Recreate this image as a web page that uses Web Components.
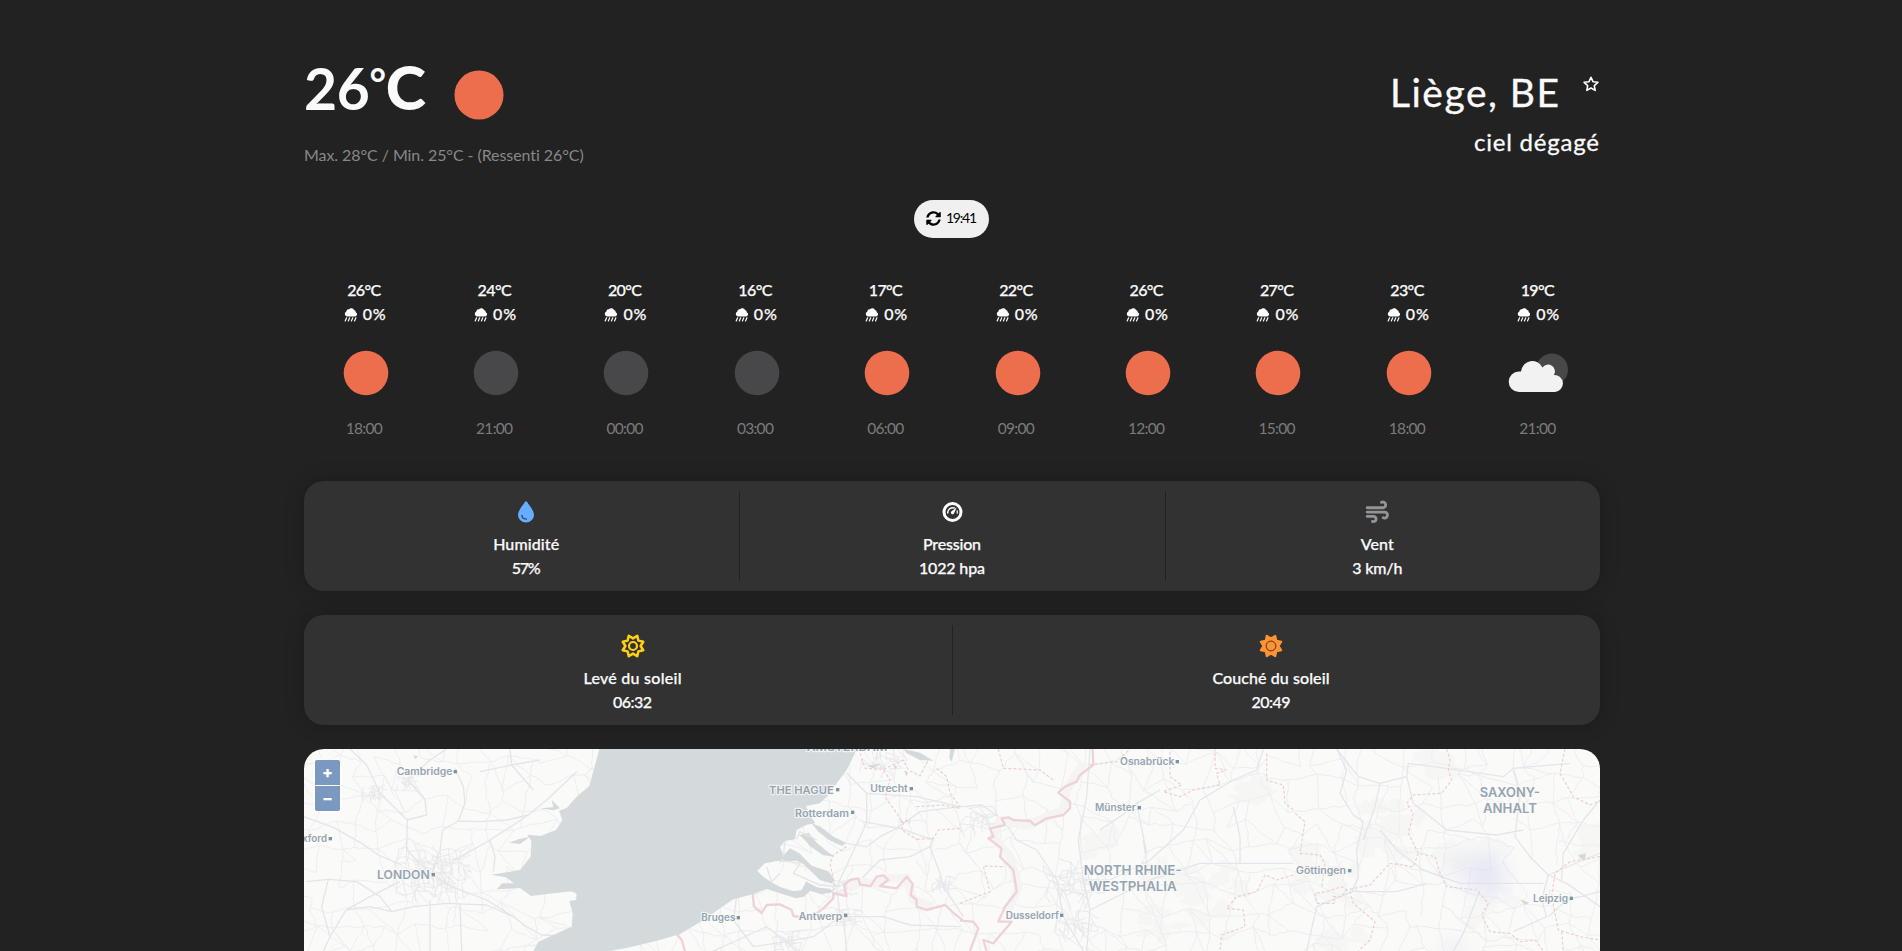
<!DOCTYPE html>
<html lang="fr">
<head>
<meta charset="utf-8">
<title>Météo</title>
<style>
html,body{margin:0;background:#222;height:951px;overflow:hidden}
body{font-family:Lato,"Open Sans",sans-serif;font-size:16px;color:#fafafa}
</style>
</head>
<body>
<weather-app></weather-app>
<script>
const define = (name, html, setup) => {
  const t = document.createElement('template');
  t.innerHTML = html;
  customElements.define(name, class extends HTMLElement {
    connectedCallback() {
      if (this.shadowRoot) return;
      this.attachShadow({mode: 'open'}).append(t.content.cloneNode(true));
      if (setup) setup(this, this.shadowRoot);
    }
  });
};

/* A single line whose tracking is spread to the width given in "w". */
define('track-line', `<style>
:host{display:inline-block;white-space:nowrap}
span{display:inline-block}
</style><span><slot></slot></span>`, (el, root) => {
  const s = root.querySelector('span'), w = +el.getAttribute('w');
  const n = el.textContent.length;
  if (n < 2) return;
  const ls = (w - s.getBoundingClientRect().width) / (n - 1);
  s.style.letterSpacing = ls + 'px';
  s.style.marginRight = -ls + 'px';
});

const sunShape = (() => {
  let p = '';
  for (let i = 0; i < 16; i++) {
    const ang = Math.PI / 8 * (i + 1), rad = i % 2 ? 7.6 : 11.1;
    p += (i ? 'L' : 'M') + (12 + rad * Math.cos(ang)).toFixed(2) + ' ' + (12 + rad * Math.sin(ang)).toFixed(2);
  }
  return p + 'Z';
})();

const icons = {
  clear: ['0 0 60 60', '<circle cx="30" cy="30" r="22.3" fill="#ec6e4c"/>'],
  night: ['0 0 60 60', '<circle cx="30" cy="30" r="22.3" fill="#48484a"/>'],
  cloudy: ['0 0 60 60', '<circle cx="43" cy="26.5" r="16" fill="#48484a"/><path d="M10 49a10.300 10.300 0 0 1 0-20.600q1 0 2 .2a11.300 11.300 0 0 1 21.500-4 6.600 6.600 0 0 1 11.300 7.400A8.200 8.200 0 0 1 46 49z" fill="#f2f2f2"/>'],
  star: ['0 0 16 16', '<path d="M8 1.300 10 5.700l4.900.6-3.600 3.300.9 4.800L8 12l-4.200 2.400.9-4.800L1.100 6.300 6 5.700z" fill="none" stroke="#fff" stroke-width="1.600" stroke-linejoin="round"/>'],
  sync: ['0 0 512 512', '<path fill="#000" d="M370.720 133.280C339.458 104.008 298.888 87.962 255.848 88c-77.458.068-144.328 53.178-162.791 126.850-1.344 5.363-6.122 9.150-11.651 9.150H24.103c-7.498 0-13.194-6.807-11.807-14.176C33.933 94.924 134.813 8 256 8c66.448 0 126.791 26.136 171.315 68.685L463.030 40.970C478.149 25.851 504 36.559 504 57.941V192c0 13.255-10.745 24-24 24H345.941c-21.382 0-32.090-25.851-16.971-40.971l41.750-41.749zM32 296h134.059c21.382 0 32.090 25.851 16.971 40.971l-41.750 41.750c31.262 29.273 71.835 45.319 114.876 45.280 77.418-.070 144.315-53.144 162.787-126.849 1.344-5.363 6.122-9.150 11.651-9.150h57.304c7.498 0 13.194 6.807 11.807 14.176C478.067 417.076 377.187 504 256 504c-66.448 0-126.791-26.136-171.315-68.685L48.970 471.030C33.851 486.149 8 475.441 8 454.059V320c0-13.255 10.745-24 24-24z"/>'],
  rain: ['0 0 14 14', '<path fill="#fff" d="M3 8.600A2.700 2.700 0 0 1 2.300 3.500 2.500 2.500 0 0 1 5 1.200 3 3 0 0 1 10 2a2 2 0 0 1 1.700 2.200 2.300 2.300 0 0 1-.5 4.400z"/><path stroke="#fff" stroke-width="1.200" stroke-linecap="round" d="M2.600 9.800 1.200 13M5.700 9.800 4.300 13M8.800 9.800 7.400 13M11.900 9.800 10.500 13"/>'],
  drop: ['0 0 24 24', '<path fill="#66adff" d="M12 1.200c.6 0 .9.300 1.200.9 2.200 4 6.800 8.300 6.800 12.800a8 7.600 0 0 1-16 0C4 10.400 8.600 6.100 10.800 2.100c.3-.6.600-.9 1.200-.9z"/><path d="M7.900 15.300q.4 3.700 4.400 3.900" fill="none" stroke="#2d3d55" stroke-width="1.300" stroke-linecap="round"/>'],
  gauge: ['0 0 24 24', '<circle cx="12.500" cy="12" r="8.500" fill="none" stroke="#fff" stroke-width="3"/><path d="M7.800 13.500a5 5 0 0 1 7-5.300" fill="none" stroke="#fff" stroke-width="1.400"/><path d="M16.600 7.600 14.200 13a1.700 1.700 0 1 1-2.600-1.800z" fill="#fff"/><path d="M17 10.400q.6 1.600.2 3.200" fill="none" stroke="#fff" stroke-width="1.200"/>'],
  wind: ['0 0 24 24', '<g fill="none" stroke="#939498" stroke-width="2.900" stroke-linecap="round"><path d="M2.200 7.800h15.300a2.900 2.900 0 1 0-1-5.500"/><path d="M2.200 12.100h17a3 3 0 1 1-1 5.700"/><path d="M2.200 16.400h6.300a2.600 2.600 0 1 1-1 5"/></g>'],
  sunrise: ['0 0 24 24', `<path d="${sunShape}" fill="none" stroke="#ffd014" stroke-width="2.500" stroke-linejoin="round"/><circle cx="12" cy="12" r="4" fill="none" stroke="#ffd014" stroke-width="2.200"/>`],
  sunset: ['0 0 24 24', `<path d="${sunShape}" fill="#ff9233" stroke="#ff9233" stroke-width="2" stroke-linejoin="round"/><circle cx="12" cy="12" r="4.900" fill="none" stroke="#4b3525" stroke-width="1"/>`]
};
define('app-icon', `<style>:host{display:block;flex:none}svg{display:block;width:100%;height:100%;overflow:visible}</style><svg></svg>`, (el, root) => {
  const [box, body] = icons[el.getAttribute('name')], svg = root.querySelector('svg');
  svg.setAttribute('viewBox', box);
  svg.innerHTML = body;
});

define('current-weather', `<style>
:host{display:flex;justify-content:space-between;height:148px}
.now{display:flex;align-items:flex-start;height:70px}
.temp{font-size:57px;font-weight:700;line-height:73px}
.temp i{font-style:normal;font-size:.7em;line-height:0;vertical-align:.3em}
.temp b{font-size:1.07em;line-height:0}
.now app-icon{width:66px;height:66px;margin:9.500px 0 0 20px}
.range{display:block;margin-top:21px;line-height:24px;color:#888}
.place{display:flex;flex-direction:column;align-items:flex-end}
.city{display:flex;gap:24px;margin-top:14.500px;height:50px;font-size:39px;line-height:50px}
.city{-webkit-text-stroke:.3px #fafafa}
.city app-icon{width:16px;height:16px;margin:9px 1px 0 0}
.sky{font-size:24px;line-height:32px;margin:9px 1px 0 0;-webkit-text-stroke:.3px #fafafa}
</style>
<div><div class="now"><track-line class="temp" w="122">26<i>°</i><b>C</b></track-line><app-icon name="clear"></app-icon></div>
<track-line class="range" w="280">Max. 28°C / Min. 25°C - (Ressenti 26°C)</track-line></div>
<div class="place"><div class="city"><track-line w="169">Liège, BE</track-line><app-icon name="star"></app-icon></div>
<track-line class="sky" w="125">ciel dégagé</track-line></div>`);

define('refresh-pill', `<style>
:host{display:flex;align-items:center;justify-content:center;gap:5px;box-sizing:border-box;width:75px;height:38px;margin:0 0 0 610px;border-radius:19px;background:#f0f0f0;color:#000;font-size:14px;line-height:36px;padding-bottom:2px}
app-icon{width:15px;height:15px}
</style><app-icon name="sync"></app-icon><div class="t"></div>`, (el, root) => {
  const t = document.createElement('track-line');
  t.setAttribute('w', 31);
  t.textContent = el.getAttribute('time');
  root.querySelector('.t').replaceWith(t);
});

define('forecast-hour', `<style>
:host{display:flex;flex-direction:column;align-items:center;line-height:24px;font-weight:500}
.temp,.rain{-webkit-text-stroke:.25px #fafafa}
.rain{display:flex;gap:5px;height:24px;margin-left:1px}
.rain app-icon{width:14px;height:14px;margin-top:6px}
.sky{width:60px;height:60px;margin:16.500px 0 13.500px 3px}
.time{color:#7b7b7b;font-weight:400;font-size:15.500px}
</style><div class="temp"></div>
<div class="rain"><app-icon name="rain"></app-icon><track-line w="23">0%</track-line></div>
<div class="sky"></div><div class="time"></div>`, (el, root) => {
  const swap = (cls, tag, attrs, text = '') => {
    const n = document.createElement(tag);
    n.className = cls;
    for (const k in attrs) n.setAttribute(k, attrs[k]);
    n.textContent = text;
    root.querySelector('.' + cls).replaceWith(n);
  };
  swap('temp', 'track-line', {w: 34}, el.getAttribute('temp'));
  swap('sky', 'app-icon', {name: el.getAttribute('sky')});
  swap('time', 'track-line', {w: 37}, el.getAttribute('time'));
});

define('stat-card', `<style>
:host{display:grid;grid-auto-flow:column;grid-auto-columns:1fr;box-sizing:border-box;height:110px;padding:10px;border-radius:20px;background:#323232;box-shadow:0 0 20px rgba(0,0,0,.22)}
</style><slot></slot>`);
define('stat-item', `<style>
:host{display:flex;flex-direction:column;align-items:center;box-sizing:border-box;padding:9px 1px 0 0;line-height:24px;font-weight:500;border-left:1px solid #222;-webkit-text-stroke:.25px #fafafa}
:host(:first-child){border-left:0}
app-icon{width:24px;height:24px;margin-bottom:8px}
</style><div class="i"></div><slot></slot>`, (el, root) => {
  const i = document.createElement('app-icon');
  i.setAttribute('name', el.getAttribute('icon'));
  root.querySelector('.i').replaceWith(i);
});

define('rain-map', `<style>
:host{display:block;position:relative;height:202px;overflow:hidden;border-radius:20px 20px 0 0;background:#fafaf8}
svg{display:block;width:1296px;height:202px}
text{font-family:Inter,"Open Sans",sans-serif;font-weight:600;fill:#95a4b2;stroke:#fafaf8;stroke-width:7;stroke-opacity:.75;paint-order:stroke;stroke-linejoin:round}
.zoom{position:absolute;left:9px;top:9px;padding:2px;border-radius:4px;background:rgba(255,255,255,.4);display:grid;gap:1px}
.zoom b{display:block;width:25px;height:25px;background:#7b98c1;color:#fff;text-align:center;font:800 16px/24px Inter,sans-serif}
.zoom b:first-child{border-radius:2px 2px 0 0}.zoom b:last-child{border-radius:0 0 2px 2px}
</style>
<svg viewBox="12 27 3888 606">
<defs><filter id="soft" x="-50%" y="-50%" width="200%" height="200%"><feGaussianBlur stdDeviation="28"/></filter></defs>
<g class="woods" fill="#f6f7f5"></g>
<g fill="none" stroke-linejoin="round"><path class="minor" stroke="#edeef0" stroke-width="3"/><path class="dense" stroke="#e8e9ec" stroke-width="3"/>
<path stroke="#e4e5e8" stroke-width="4" d="M12 230 100 262 185 310 235 345 305 375M70 633 90 590 138 510 210 470 300 425M138 510 210 500 275 515 340 500 440 490 560 495 640 530 680 560 725 585 800 588M275 515 240 470 170 425 85 418 20 425M395 405 420 330 428 270M395 405 320 330 322 240 240 160 200 75 150 27M320 240 380 225 375 180 325 120 390 60 440 27M428 270 475 243 540 245 620 240 685 225 740 180 830 95M475 243 495 190 490 140 465 85M630 27 635 75 700 150M540 95 635 75 720 60M455 365 500 340 570 300 640 255 685 225M570 300 585 350 580 395M640 530 560 480 455 440 400 405M390 480 390 633M480 490 485 633M85 418 65 500 90 590"/>
<path stroke="#e5e6e9" stroke-width="4" d="M1640 100 1700 160 1700 245 1690 270 1610 440 1620 530 1660 530M1690 245 1800 265 1900 300 1890 320M1640 310 1700 320 1740 290 1790 265 1860 215 1980 200M1890 320 1830 350 1740 360 1660 440M1890 320 1920 400 1930 440 1990 530M1630 530 1750 530 1830 555 1980 560M1630 530 1640 633M1620 530 1540 590 1460 605 1360 620 1300 540 1310 470M1460 605 1400 560 1240 633M1460 605 1490 633M1700 160 1850 170 1980 200"/>
<path stroke="#e5e6e9" stroke-width="4" d="M1980 200 2045 195 2110 240 2150 300 2210 330 2270 420 2290 530 2350 633M2370 27 2360 170 2335 300 2350 420 2430 420 2550 360 2650 270 2700 180 2800 120 2870 90 2890 27M2350 420 2370 510 2360 633M2370 510 2470 460 2550 420 2700 370 2850 370 2980 370M2530 300 2545 400M2510 190 2540 340M2400 270 2460 230 2510 190 2580 150M2800 200 2820 290 2820 370M3110 27 3140 90 3120 160 3160 225 3190 245 3170 330 3175 410 3155 455 3290 455 3380 430M3110 27 3175 110 3240 130 3225 200 3190 300M3240 130 3320 110 3325 70 3440 85 3610 110 3640 85 3810 70M3240 270 3290 330 3370 390 3480 430 3640 430 3730 430M3320 110 3340 190 3440 270 3590 285 3670 270M3640 90 3660 160 3645 290 3690 350 3745 405 3800 430 3900 500M3745 405 3850 360 3900 340M3785 420 3790 340 3850 240 3900 180M3745 530 3800 480 3900 455M3540 450 3490 580 3460 633M3020 633 3050 500 3155 455M3745 405 3725 480 3740 530 3640 575"/></g>
<g fill="#d4dadc"><path d="M898 27 885 75 868 138 830 170 800 204 777 212 787 240 768 270 722 288 682 284 694 302 692 350 660 390 620 397 574 404 618 412 642 430 606 430 590 448 622 446 660 444 693 468 760 460 815 454 830 462 828 480 808 483 818 520 815 560 760 585 715 605 700 633H930L990 622 1080 600 1140 582 1210 541 1260 505 1300 478 1360 462 1400 447 1440 460 1488 475 1512 470 1530 452 1564 463 1600 456 1590 446 1552 442 1518 424 1505 450 1480 453 1440 440 1418 428 1390 410 1373 392 1395 372 1430 363 1444 366 1450 345 1440 320 1455 303 1485 298 1490 270 1520 254 1546 250 1530 226 1518 198 1560 190 1580 170 1610 130 1640 90 1660 50 1670 27Z"/>
<path d="M1445 352 1470 325 1498 340 1510 352 1535 377 1585 394 1602 417 1597 431 1560 420 1535 396 1510 372 1490 362 1450 364ZM1498 285 1526 278 1550 308 1580 333 1604 350 1570 346 1532 320 1512 298ZM1535 250 1562 260 1600 290 1638 308 1626 318 1588 301 1555 275ZM720 205 760 202 755 180 780 205 760 211ZM628 308 655 298 690 290 660 312ZM1700 78 1745 70 1720 85ZM1810 27 1860 38 1900 62 1860 60 1820 40ZM1950 27 1965 27 1955 65 1948 55ZM1780 75 1792 80 1785 88ZM1812 92 1824 96 1820 110ZM340 45 355 50 345 57ZM3835 345 3858 340 3855 360 3840 355ZM3660 478 3688 488 3675 495Z"/></g>
<path fill="#fafaf8" d="M1372 392 1395 370 1440 362 1430 385 1450 402 1480 390 1510 390 1560 425 1590 446 1552 442 1518 424 1505 450 1480 453 1440 440 1418 428 1390 410Z"/>
<path fill="none" stroke="#e3e6e8" stroke-width="4" d="M1400 380 1415 425 1440 400M1440 362 1500 370 1480 400 1560 435 1620 440M1455 303 1450 350M1490 298 1500 275 1550 300"/>
<path fill="none" stroke="#f6f4f3" stroke-width="26" stroke-linejoin="round" d="M1645 445 1685 425 1730 435 1750 415 1820 415 1840 480 1900 500M2350 70 2300 150 2290 210 2180 255 2100 240 2080 290 2130 350 2155 440 2120 520"/>
<g fill="none" stroke="#edd3d7" stroke-linejoin="round"><path stroke-width="7" d="M1358 462 1362 500 1385 519 1400 495 1440 493 1475 510 1480 528 1530 535 1570 505 1600 475 1600 460 1640 468 1632 435 1650 420 1675 415 1680 434 1712 438 1730 410 1750 406 1765 420 1740 438 1790 445 1820 410 1838 432 1832 465 1850 480 1850 500 1880 510 1935 495 1962 520 1990 542M2378 27 2380 75 2340 105 2330 125 2295 140 2275 158 2310 185 2310 205 2290 225 2240 235 2205 256 2190 243 2140 240 2125 232 2105 235 2115 255 2070 265 2080 290 2065 295 2105 325 2100 350 2140 390 2150 455 2115 500 2095 545 2135 545 2080 610 2050 600 2060 633M1980 542 2020 545 2035 565 2010 633M1130 582 1145 600 1155 633"/>
<g stroke="#eccdd0" stroke-width="3.500" stroke-dasharray="9 6"><path d="M1680 40 1695 85 1750 88 1770 120 1755 170 1790 220 1810 250 1805 270 1850 298M1750 88 1810 60 1825 90 1860 108 1885 60M1850 298 1900 295 1915 270 1980 265M1640 320 1600 345 1590 370 1605 440 1598 460M1850 200 1930 195 1980 205M1910 85 1940 110 1950 160 1980 200M1800 245 1830 242 1825 255M2095 27 2110 85 2220 90 2260 120M2370 75 2450 65 2490 27M2610 35 2610 110 2645 135 2590 155 2640 170 2680 150 2760 135 2750 100 2780 90 2745 85 2745 27M2900 40 2900 120 2950 135 2955 190 2980 210M1980 490 2070 455 2050 378 2110 380M2980 405 2930 420 2895 405 2870 455 2810 470 2780 505 2830 510 2835 560 2765 585 2760 633M3440 27 3450 60 3445 90 3455 120 3425 160 3340 165 3320 190 3340 220 3325 280 3355 340 3405 350 3420 400 3440 440 3530 450 3565 490 3545 525 3570 575 3630 580 3660 605 3705 600 3730 633M3355 340 3340 380 3270 370 3210 435 3140 450 3125 470 3100 470 3105 490 3050 490 3045 460 3080 455 3125 440 3150 455 3160 490 3225 545 3210 600 3175 633M2985 220 3015 245 3000 340 3060 345 3075 370 3065 445M3795 27 3780 100 3820 170 3870 195 3905 180M3900 350 3810 365 3765 400 3755 470 3775 570 3840 590 3900 600M3785 575 3790 633"/></g></g>
<g filter="url(#soft)" fill="#dcdcf2" opacity=".6"><ellipse cx="3555" cy="405" rx="64" ry="62"/><ellipse cx="3470" cy="375" rx="50" ry="20"/><ellipse cx="3460" cy="625" rx="35" ry="20"/></g>
<g class="names"></g>
</svg>
<div class="zoom"><b>+</b><b>−</b></div>`, (el, root) => {
  const $ = s => root.querySelector(s);
  let seed = 11;
  const rnd = () => (seed = (seed * 16807) % 2147483647) / 2147483647;
  const net = (x0, y0, x1, y1, step, keep) => {
    const pts = [], cols = Math.ceil((x1 - x0) / step), rows = Math.ceil((y1 - y0) / step);
    for (let r = 0; r <= rows; r++) for (let c = 0; c <= cols; c++)
      pts.push([x0 + (c + rnd() * .9 - .45) * step, y0 + (r + rnd() * .9 - .45) * step]);
    let d = '';
    const link = (a, b) => {
      d += `M${a.map(Math.round)}`;
      for (let i = 1; i <= 4; i++) {
        const j = i < 4 ? step * .13 : 0;
        d += `L${Math.round(a[0] + (b[0] - a[0]) * i / 4 + (rnd() - .5) * j)} ${Math.round(a[1] + (b[1] - a[1]) * i / 4 + (rnd() - .5) * j)}`;
      }
    };
    for (let r = 0; r < rows; r++) for (let c = 0; c < cols; c++) {
      const k = r * (cols + 1) + c;
      if (rnd() < keep) link(pts[k], pts[k + 1]);
      if (rnd() < keep) link(pts[k], pts[k + cols + 1]);
      if (rnd() < keep * .35) link(pts[k], pts[k + cols + 2]);
    }
    return d;
  };
  $('.minor').setAttribute('d', net(-20, 0, 3940, 680, 64, .78));
  const city = (x, y, r, s) => net(x - r, y - r * .7, x + r, y + r * .7, s, .7) + net(x - r / 2, y - r * .4, x + r / 2, y + r * .4, s * .6, .75);
  $('.dense').setAttribute('d', city(400, 405, 110, 22) + city(320, 125, 25, 15) + city(220, 160, 30, 16) + city(1630, 440, 30, 18) + city(1465, 605, 40, 18) + city(1640, 530, 30, 18) + city(1750, 60, 60, 30) + city(2040, 240, 50, 26) + city(2330, 430, 90, 32) + city(2320, 560, 60, 28) + city(1925, 430, 25, 16));
  let w = '';
  for (const [cx, cy, n, sx, sy] of [[2680, 480, 30, 150, 110], [3270, 270, 22, 90, 80], [3080, 420, 18, 90, 90], [3500, 340, 14, 100, 40], [3380, 80, 10, 80, 30], [2400, 310, 8, 60, 30], [3120, 600, 8, 80, 30], [3580, 500, 8, 60, 50], [3860, 300, 6, 30, 40], [2870, 140, 8, 60, 40]])
    for (let i = 0; i < n; i++) {
      const x = cx + (rnd() - .5) * 2 * sx, y = cy + (rnd() - .5) * 2 * sy;
      let p = '';
      for (let k = 0; k < 9; k++) { const a = k / 9 * 6.283, r = 8 + rnd() * 26; p += (k ? 'L' : 'M') + Math.round(x + 1.4 * r * Math.cos(a)) + ' ' + Math.round(y + r * Math.sin(a)); }
      w += p + 'Z';
    }
  $('.woods').innerHTML = `<path d="${w}"/>`;
  $('.names').innerHTML = [
    ['Cambridge', 290, 105, 167, 29, 466, 95], ['Oxford', -16, 306, 97, 29, 91, 296], ['LONDON', 231, 416, 158, 35, 400, 404],
    ['AMSTERDAM', 1520, 33, 242, 33], ['THE HAGUE', 1407, 162, 194, 33, 1613, 149], ['Utrecht', 1711, 155, 112, 29, 1834, 146],
    ['Rotterdam', 1485, 230, 162, 29, 1658, 217], ['Bruges', 1204, 544, 102, 29, 1315, 533], ['Antwerp', 1496, 539, 131, 29, 1637, 526],
    ['Osnabrück', 2460, 75, 163, 29, 2632, 65], ['Münster', 2385, 213, 122, 29, 2518, 203], ['Dusseldorf', 2117, 536, 160, 29, 2285, 526],
    ['NORTH RHINE-', 2351, 406, 294, 38], ['WESTPHALIA', 2366, 454, 264, 38], ['Göttingen', 2988, 402, 150, 29, 3149, 392],
    ['SAXONY-', 3539, 172, 181, 38], ['ANHALT', 3549, 220, 162, 38], ['Leipzig', 3699, 486, 105, 29, 3814, 475]
  ].map(([t, x, y, len, s, dx, dy]) => `<text x="${x}" y="${y}" textLength="${len}" lengthAdjust="spacingAndGlyphs" font-size="${s}">${t}</text>` +
    (dx ? `<rect x="${dx - 5}" y="${dy - 5}" width="10" height="10" fill="#8193a2"/>` : '')).join('');
});

define('weather-app', `<style>
:host{display:block;box-sizing:border-box;width:1296px;margin:0 0 0 304px;padding-top:52px}
.hours{display:grid;grid-template-columns:repeat(10,130.400px);margin:40px -4px 41px -5px}
stat-card{margin-bottom:24px}
</style>
<current-weather></current-weather>
<refresh-pill time="19:41"></refresh-pill>
<div class="hours">
<forecast-hour temp="26°C" sky="clear" time="18:00"></forecast-hour>
<forecast-hour temp="24°C" sky="night" time="21:00"></forecast-hour>
<forecast-hour temp="20°C" sky="night" time="00:00"></forecast-hour>
<forecast-hour temp="16°C" sky="night" time="03:00"></forecast-hour>
<forecast-hour temp="17°C" sky="clear" time="06:00"></forecast-hour>
<forecast-hour temp="22°C" sky="clear" time="09:00"></forecast-hour>
<forecast-hour temp="26°C" sky="clear" time="12:00"></forecast-hour>
<forecast-hour temp="27°C" sky="clear" time="15:00"></forecast-hour>
<forecast-hour temp="23°C" sky="clear" time="18:00"></forecast-hour>
<forecast-hour temp="19°C" sky="cloudy" time="21:00"></forecast-hour>
</div>
<stat-card>
<stat-item icon="drop"><track-line w="66">Humidité</track-line><track-line w="29">57%</track-line></stat-item>
<stat-item icon="gauge"><track-line w="58">Pression</track-line><track-line w="66">1022 hpa</track-line></stat-item>
<stat-item icon="wind"><track-line w="33">Vent</track-line><track-line w="50">3 km/h</track-line></stat-item>
</stat-card>
<stat-card>
<stat-item icon="sunrise"><track-line w="98">Levé du soleil</track-line><track-line w="39">06:32</track-line></stat-item>
<stat-item icon="sunset"><track-line w="117">Couché du soleil</track-line><track-line w="39">20:49</track-line></stat-item>
</stat-card>
<rain-map></rain-map>`);
</script>
</body>
</html>
